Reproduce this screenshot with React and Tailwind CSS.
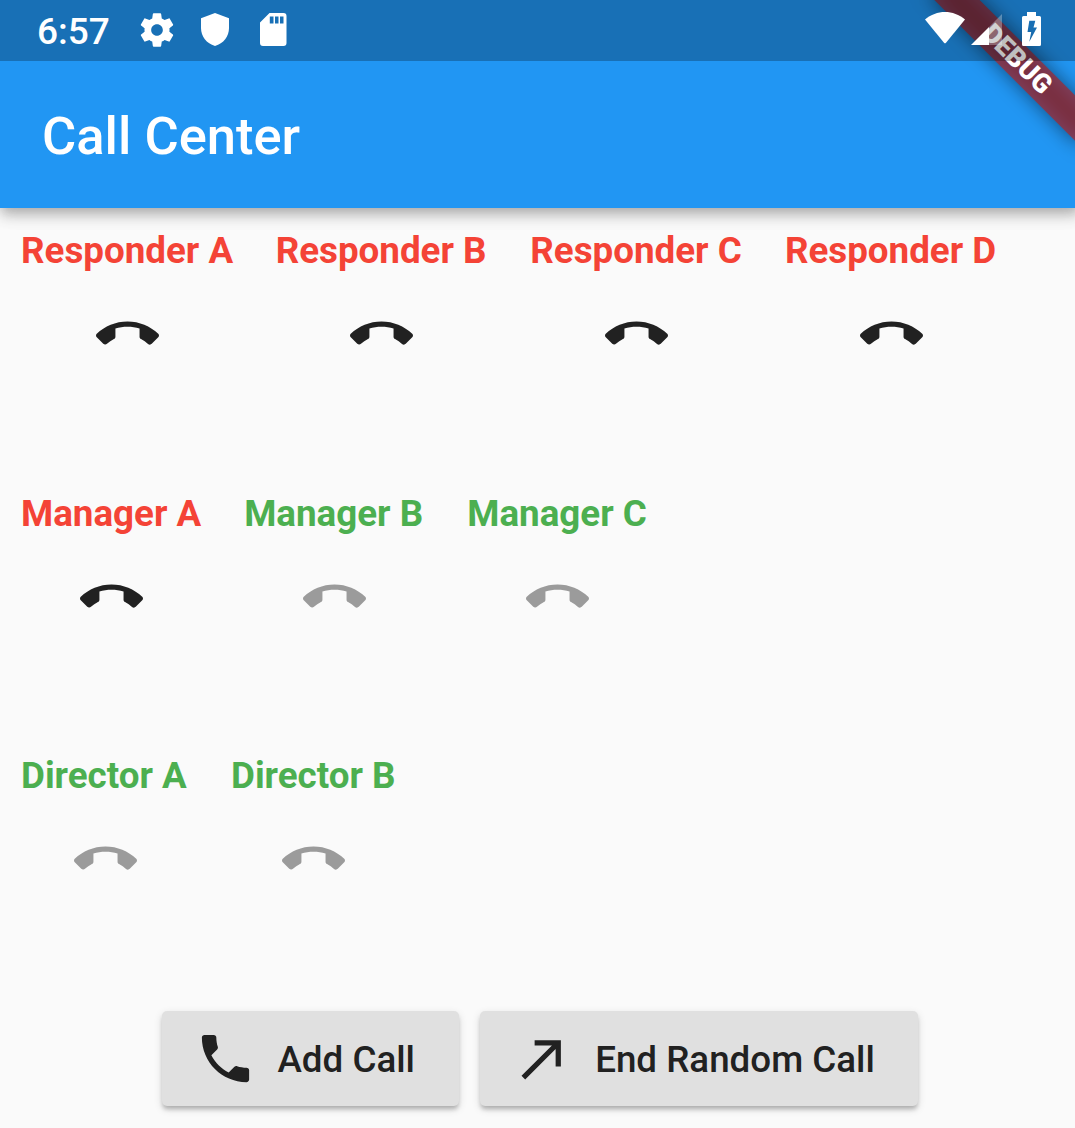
const CALL_END =
  'M12 9c-1.6 0-3.15.25-4.6.72v3.1c0 .39-.23.74-.56.9-.98.49-1.87 1.12-2.66 1.85-.18.18-.43.28-.7.28-.28 0-.53-.11-.71-.29L.29 13.08c-.18-.17-.29-.42-.29-.7 0-.28.11-.53.29-.71C3.34 8.78 7.46 7 12 7s8.66 1.78 11.71 4.67c.18.18.29.43.29.71 0 .28-.11.53-.29.71l-2.48 2.48c-.18.18-.43.29-.71.29-.27 0-.52-.11-.7-.28-.79-.74-1.69-1.36-2.67-1.85-.33-.16-.56-.5-.56-.9v-3.1C15.15 9.25 13.6 9 12 9z';
const CALL =
  'M6.62 10.79c1.44 2.83 3.76 5.14 6.59 6.59l2.2-2.2c.27-.27.67-.36 1.02-.24 1.12.37 2.33.57 3.57.57.55 0 1 .45 1 1V20c0 .55-.45 1-1 1-9.39 0-17-7.61-17-17 0-.55.45-1 1-1h3.5c.55 0 1 .45 1 1 0 1.25.2 2.45.57 3.57.11.35.03.74-.25 1.02l-2.2 2.2z';
const CALL_MADE = 'M9 5v2h6.59L4 18.59 5.41 20 17 8.41V15h2V5z';
const SETTINGS =
  'M19.43 12.98c.04-.32.07-.64.07-.98s-.03-.66-.07-.98l2.11-1.65c.19-.15.24-.42.12-.64l-2-3.46c-.12-.22-.39-.3-.61-.22l-2.49 1c-.52-.4-1.08-.73-1.69-.98l-.38-2.65C14.46 2.18 14.25 2 14 2h-4c-.25 0-.46.18-.49.42l-.38 2.65c-.61.25-1.17.59-1.69.98l-2.49-1c-.23-.09-.49 0-.61.22l-2 3.46c-.13.22-.07.49.12.64l2.11 1.65c-.04.32-.07.65-.07.98s.03.66.07.98l-2.11 1.65c-.19.15-.24.42-.12.64l2 3.46c.12.22.39.3.61.22l2.49-1c.52.4 1.08.73 1.69.98l.38 2.65c.03.24.24.42.49.42h4c.25 0 .46-.18.49-.42l.38-2.65c.61-.25 1.17-.59 1.69-.98l2.49 1c.23.09.49 0 .61-.22l2-3.46c.12-.22.07-.49-.12-.64l-2.11-1.65zM12 15.5c-1.93 0-3.5-1.57-3.5-3.5s1.57-3.5 3.5-3.5 3.5 1.57 3.5 3.5-1.57 3.5-3.5 3.5z';

const rows = [
  [
    { name: 'Responder A', busy: true, width: 'w-[212.625px]' },
    { name: 'Responder B', busy: true, width: 'w-[212.625px]' },
    { name: 'Responder C', busy: true, width: 'w-[212.625px]' },
    { name: 'Responder D', busy: true, width: 'w-[212.625px]' },
  ],
  [
    { name: 'Manager A', busy: true, width: 'w-[181.125px]' },
    { name: 'Manager B', busy: false, width: 'w-[181.125px]' },
    { name: 'Manager C', busy: false, width: 'w-[181.125px]' },
  ],
  [
    { name: 'Director A', busy: false, width: 'w-[168px]' },
    { name: 'Director B', busy: false, width: 'w-[165.375px]' },
  ],
];

function Icon({ d, className = 'size-[63px] shrink-0' }) {
  return (
    <svg viewBox="0 0 24 24" fill="currentColor" className={className} aria-hidden="true">
      <path d={d} />
    </svg>
  );
}

function StatusBar() {
  return (
    <div className="relative z-20 flex h-[61px] items-start justify-between bg-black/25 text-white">
      <div className="flex items-start pl-[37px]">
        <span className="mt-[10px] w-[100px] text-[37px] leading-[44px] font-medium">6:57</span>
        <Icon d={SETTINGS} className="mt-[10px] size-[40px]" />
        <svg viewBox="0 0 28 33" fill="currentColor" className="mt-[13px] ml-[24px] h-[33px] w-[28px]">
          <path d="M14 0 28 5.2V15c0 8.500-5.500 15.500-14 18C5.500 30.500 0 23.500 0 15V5.200z" />
        </svg>
        <svg viewBox="0 0 27 33" fill="currentColor" fillRule="evenodd" className="mt-[13px] ml-[31px] h-[33px] w-[27px]">
          <path d="M9.500 0H23.500a3 3 0 0 1 3 3V30a3 3 0 0 1-3 3H3a3 3 0 0 1-3-3V9.500zM9.800 3.500v7h3.700v-7zM15 3.500v7h3.500v-7zM20 3.500v7h3.500v-7z" />
        </svg>
      </div>
      <div className="flex items-start pr-[39px]">
        <svg viewBox="0 0 40 32" fill="currentColor" className="mt-[12px] h-[32px] w-[40px]">
          <path d="M0 7.500C11.500-2.500 28.500-2.500 40 7.500L21 30.700q-1 1.200-2 0z" />
        </svg>
        <svg viewBox="0 0 31 31" fill="currentColor" className="mt-[14px] ml-[6px] size-[31px]">
          <path d="M31 0V31H18V13z" opacity=".3" />
          <path d="M18 13V31H0z" />
        </svg>
        <svg viewBox="0 0 19 34" fill="currentColor" fillRule="evenodd" className="mt-[12px] ml-[20px] h-[34px] w-[19px]">
          <path d="M5 0h9v4h3.500q1.500 0 1.500 1.500v27q0 1.500-1.500 1.500h-16Q0 34 0 32.500v-27Q0 4 1.500 4H5zM7.300 8.700 5.500 20H9.200L7.300 29.700 15 15.500H11.500L13.300 8.700z" />
        </svg>
      </div>
    </div>
  );
}

function DebugRibbon() {
  return (
    <div className="absolute top-0 right-0 z-10 size-[208px] overflow-hidden">
      <div className="absolute top-[43px] right-[-41px] h-[32px] w-[210px] rotate-45">
        <div className="absolute inset-0 bg-black/50 blur-[10px]" />
        <div className="relative flex h-full items-center justify-center bg-[#b71c1c]/63 pb-[1px] pl-[2px] text-[26.800px] leading-none font-black text-white">
          DEBUG
        </div>
      </div>
    </div>
  );
}

function Agent({ name, busy, width }) {
  return (
    <div className="flex flex-col items-center px-[21px]">
      <span
        className={`${width} text-[36.750px] leading-[43px] font-bold whitespace-nowrap ${busy ? 'text-[#f44336]' : 'text-[#4caf50]'}`}
      >
        {name}
      </span>
      <div className={`mt-[31px] ${busy ? 'text-[#212121]' : 'text-[#9b9b9b]'}`}>
        <Icon d={CALL_END} />
      </div>
    </div>
  );
}

function RaisedButton({ icon, label, labelWidth }) {
  return (
    <button className="flex h-[95px] items-center gap-[21px] rounded-[5px] bg-[#e0e0e0] pr-[42px] pl-[31.500px] text-left text-[36.750px] leading-[43px] font-medium whitespace-nowrap text-[#212121] shadow-[0_4px_4px_-1px_rgba(0,0,0,0.22),0_3px_8px_0_rgba(0,0,0,0.14)]">
      <Icon d={icon} />
      <span className={`${labelWidth} pt-[2px]`}>{label}</span>
    </button>
  );
}

export default function App() {
  return (
    <div className="relative h-[1128px] w-[1075px] overflow-hidden bg-[#fafafa] font-[Roboto,sans-serif]">
      <div className="w-[1080px]">
        <header className="relative h-[208px] bg-[#2196f3] shadow-[0_6px_10px_-3px_rgba(0,0,0,0.15),0_9px_13px_0_rgba(0,0,0,0.14),0_3px_20px_0_rgba(0,0,0,0.1)]">
          <StatusBar />
          <h1 className="flex h-[147px] items-center pt-[3px] pl-[42px] text-[52.500px] leading-none font-medium text-white">
            Call Center
          </h1>
          <DebugRibbon />
        </header>
        <main className="pt-[21px]">
          {rows.map((row) => (
            <div key={row[0].name} className="flex h-[262.500px]">
              {row.map((agent) => (
                <Agent key={agent.name} {...agent} />
              ))}
            </div>
          ))}
          <div className="mt-[-5.500px] flex justify-center gap-[21px]">
            <RaisedButton icon={CALL} label="Add Call" labelWidth="w-[139.125px]" />
            <RaisedButton icon={CALL_MADE} label="End Random Call" labelWidth="w-[280.875px]" />
          </div>
        </main>
      </div>
    </div>
  );
}
